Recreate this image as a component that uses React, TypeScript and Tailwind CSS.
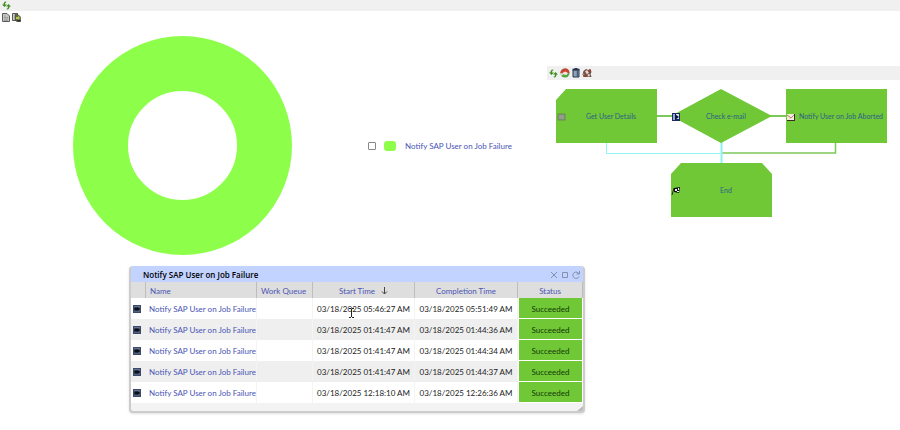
import { useState } from 'react'

interface Job {
  start: string
  completion: string
}

const JOB_NAME = 'Notify SAP User on Job Failure'

const jobs: Job[] = [
  { start: '03/18/2025 05:46:27 AM', completion: '03/18/2025 05:51:49 AM' },
  { start: '03/18/2025 01:41:47 AM', completion: '03/18/2025 01:44:36 AM' },
  { start: '03/18/2025 01:41:47 AM', completion: '03/18/2025 01:44:34 AM' },
  { start: '03/18/2025 01:41:47 AM', completion: '03/18/2025 01:44:37 AM' },
  { start: '03/18/2025 12:18:10 AM', completion: '03/18/2025 12:26:36 AM' },
]

function RefreshIcon() {
  return (
    <svg className="w-[9px] h-[9px]" viewBox="0 0 18 18" fill="#3f8f1f" aria-hidden="true">
      <path d="M8 1C4 1 3 4 3 7H0l5 5 5-5H6C6 4.500 7 3 9 2z" />
      <path d="M10 17c4 0 5-3 5-6h3l-5-5-5 5h4c0 2.500-1 4-3 5z" />
    </svg>
  )
}

function DocumentIcon() {
  return (
    <svg className="w-2 h-[9px]" viewBox="0 0 16 18" aria-hidden="true">
      <path d="M1 1h9l5 5v11H1z" fill="#c6c6c2" stroke="#5c5c5c" strokeWidth="2" />
      <path d="M4 6h4M4 9h8M4 12h8M4 15h8" fill="none" stroke="#777" strokeWidth="1" />
    </svg>
  )
}

function ExportIcon() {
  return (
    <svg className="w-[9px] h-[9px]" viewBox="0 0 18 18" aria-hidden="true">
      <path d="M1 1h10v14H1z" fill="#ccc" stroke="#555" strokeWidth="2" />
      <path d="M6 3h6l5 5v9H9l-3-4z" fill="#5d6b40" stroke="#333" strokeWidth="1" />
      <path d="M8 8h4V5l4 5-4 4v-2H8z" fill="#b5c94a" />
      <path d="M11 14h6v3h-6z" fill="#222" />
    </svg>
  )
}

function RestartIcon() {
  return (
    <svg className="w-[10px] h-[10px]" viewBox="0 0 20 20" aria-hidden="true">
      <ellipse cx="10" cy="10" rx="9" ry="9" fill="#56a53f" />
      <path d="M1 11C0 4 6 1 11 1c5 0 8 4 8 9l-9-1z" fill="#cf4036" />
      <path d="M5 10l5-3 6 3-3 4-6-1z" fill="#f6e6e0" />
      <path d="M1 11l4-1 1 4-3 1z" fill="#f3dcd8" />
    </svg>
  )
}

function TrashIcon() {
  return (
    <svg className="w-2 h-[10px]" viewBox="0 0 16 20" aria-hidden="true">
      <path d="M2 4h12v14H2z" fill="#8fa0b8" stroke="#26354d" strokeWidth="2" />
      <path d="M1 3h14M5 1h6" stroke="#26354d" strokeWidth="3" />
      <path d="M11 5v13" stroke="#4a5d7a" strokeWidth="3" />
    </svg>
  )
}

function DebugIcon() {
  return (
    <svg className="w-[10px] h-[10px]" viewBox="0 0 20 20" aria-hidden="true">
      <path d="M3 6l5-4 4 2 5-2 2 6-2 4 2 6H3l-2-5z" fill="#6b4f47" />
      <path d="M6 7l4-3 4 5-4 4zM12 12l4 1-1 4h-4zM2 11l3 1-1 3z" fill="#e3d5ce" />
      <path d="M13 4l4-1 1 5-4 1zM5 13l4 1v4H5z" fill="#a63a33" />
    </svg>
  )
}

function JobIcon() {
  return (
    <svg className="block w-2 h-2 ml-[2px]" viewBox="0 0 16 16" aria-hidden="true">
      <rect width="16" height="16" fill="#3b4a68" />
      <path d="M2 2h12v3H2zM2 11h12v2H2z" fill="#66748f" />
      <path d="M3 5h6V4l5 4-5 4v-1H3z" fill="#0b0f1a" />
    </svg>
  )
}

function Toolbar() {
  return (
    <div className="flex items-center gap-px h-[14px] pl-px bg-[#f0f0f0]">
      <button aria-label="Refresh" className="w-[10px] flex justify-center"><RefreshIcon /></button>
      <button aria-label="Restart" className="w-[11px] flex justify-center"><RestartIcon /></button>
      <button aria-label="Delete" className="w-[10px] flex justify-center"><TrashIcon /></button>
      <button aria-label="Debug" className="w-[10px] flex justify-center"><DebugIcon /></button>
    </div>
  )
}

function FlowDiagram() {
  return (
    <svg width="353" height="138" viewBox="0 0 353 138" className="block text-[7px]" role="img" aria-label="Process steps">
      <g fill="none">
        <path d="M110 36h16M223 36h16" stroke="#7cc95a" strokeWidth="2" />
        <path d="M288.500 63v10H175" stroke="#7cc95a" strokeWidth="1.500" />
        <path d="M59.500 63v10.500h114" stroke="#8ff5f3" />
        <path d="M174.500 62v22" stroke="#8ff0f0" strokeWidth="2" />
      </g>
      <g fill="#70c837">
        <path d="M19 9h91v54H9V20z" />
        <path d="M174 9l51 27-51 27-50-27z" />
        <path d="M239 9h101v54H239z" />
        <path d="M134 83h81l10 11v43H124V94z" />
      </g>
      <g>
        <rect x="11" y="34" width="7" height="6" fill="#849078" stroke="#6c8a5a" strokeWidth="1" />
        <path d="M12 36h5M12 38h5" stroke="#a3ab9c" strokeWidth="1" />
      </g>
      <g>
        <rect x="125" y="33" width="8" height="8" fill="#1b2d63" />
        <path d="M126 34h2v6h-2z" fill="#8cabd8" />
        <path d="M129 34h3v5h-3z" fill="#dce7f5" />
        <path d="M128 34l4 3-4 3z" fill="#101936" />
      </g>
      <g>
        <rect x="240" y="34" width="8" height="7" fill="#3c2b27" />
        <rect x="240" y="34" width="7" height="6" fill="#f4e9dd" />
        <path d="M240 35l4 3 3-3" fill="none" stroke="#b08078" strokeWidth="1" />
      </g>
      <g>
        <path d="M127 108l-2 7" stroke="#222" strokeWidth="1" />
        <path d="M127 108l6-1-1 6-5-1z" fill="#111" />
        <path d="M128 109h2v2h-2zM130 111h2v1h-2zM131 108h1v2h-1z" fill="#eee" />
      </g>
      <g fill="#2b6286" textAnchor="middle">
        <text x="64" y="39">Get User Details</text>
        <text x="179" y="39">Check e-mail</text>
        <text x="294" y="39">Notify User on Job Aborted</text>
        <text x="179" y="113">End</text>
      </g>
    </svg>
  )
}

function JobsWindow() {
  const head = 'p-0 pt-px font-normal border-r border-[#bdbdbd]'
  const cell = 'p-0 pt-px border-r border-[#f4f4f4]'
  return (
    <section className="w-[456px] ml-[129px] rounded-[4px] border-2 border-t-0 border-[#cccccc] bg-[#f3f3f3] overflow-hidden shadow-sm">
      <header className="flex items-center h-4 pt-px pl-3 pr-[3px] bg-[#c2d3ff]">
        <h2 className="flex-1 font-semibold text-black font-['Open_Sans','Noto_Sans',sans-serif]">{JOB_NAME}</h2>
        <div className="flex gap-[3px] text-[#8390ac]">
          <button aria-label="Close">
            <svg className="w-2 h-2" viewBox="0 0 8 8" fill="none" stroke="currentColor"><path d="M1 1l6 6M7 1L1 7" /></svg>
          </button>
          <button aria-label="Maximize">
            <svg className="w-2 h-2" viewBox="0 0 8 8" fill="none" stroke="currentColor"><path d="M1.500 1.500h5v5h-5z" /></svg>
          </button>
          <button aria-label="Reload">
            <svg className="w-2 h-2" viewBox="0 0 8 8" fill="none" stroke="currentColor"><path d="M7 3A3.200 3.200 0 1 0 7 5.500M7.500 0v3h-3" /></svg>
          </button>
        </div>
      </header>
      <table className="w-full table-fixed border-separate border-spacing-0 whitespace-nowrap">
        <colgroup>
          <col className="w-[15px]" />
          <col className="w-[111px]" />
          <col className="w-[56px]" />
          <col className="w-[102px]" />
          <col className="w-[103px]" />
          <col />
        </colgroup>
        <thead>
          <tr className="h-4 bg-[#dedede] text-[#4a55b5]">
            <th className={head} aria-label="Type" />
            <th className={`${head} text-left pl-1`}>Name</th>
            <th className={`${head} text-left pl-1`}>Work Queue</th>
            <th className={head}>
              <span className="flex items-center justify-center gap-[6px]">
                Start Time
                <svg className="w-[7px] h-2 text-[#444]" viewBox="0 0 7 8" fill="none" stroke="currentColor"><path d="M3.500 0v7M1 4.500l2.500 2.500L6 4.500" /></svg>
              </span>
            </th>
            <th className={head}>Completion Time</th>
            <th className={head}>Status</th>
          </tr>
        </thead>
        <tbody>
          {jobs.map((job, i) => (
            <tr key={i} className="h-[21px] bg-white even:bg-[#efefef] text-center text-[#222]">
              <td className="p-0"><JobIcon /></td>
              <td className={`${cell} text-left pl-[3px]`}>
                <a href="#job" className="text-[#4a55b5]">{JOB_NAME}</a>
              </td>
              <td className={cell} />
              <td className={`${cell} relative`}>
                {job.start}
                {i === 0 && (
                  <svg className="absolute left-9 top-[10px] w-[5px] h-[10px]" viewBox="0 0 5 10" fill="none" stroke="#222" aria-hidden="true">
                    <path d="M0 .5h2M3 .5h2M2.500 1v8M0 9.500h2M3 9.500h2" />
                  </svg>
                )}
              </td>
              <td className={cell}>{job.completion}</td>
              <td className="p-0 pt-px bg-[#70c837] border-b border-x border-white text-[#123a08]">Succeeded</td>
            </tr>
          ))}
        </tbody>
      </table>
      <footer className="flex justify-end items-end h-2">
        <svg className="w-[6px] h-[5px]" viewBox="0 0 6 5" aria-hidden="true"><path d="M6 0v5H0z" fill="#bcbcbc" /></svg>
      </footer>
    </section>
  )
}

export default function App() {
  const [checked, setChecked] = useState(false)

  return (
    <main className="min-h-screen bg-white text-[8px] leading-[10px] font-['Lato','Open_Sans',sans-serif]">
      <div className="flex items-center h-[11px] pl-[2px] bg-[#f0f0f0]">
        <button aria-label="Refresh"><RefreshIcon /></button>
      </div>
      <div className="flex items-center gap-[2px] h-3 pl-[2px]">
        <button aria-label="Copy"><DocumentIcon /></button>
        <button aria-label="Export"><ExportIcon /></button>
      </div>

      <div className="flex items-start">
        <div className="flex items-center w-[547px] shrink-0 pl-[73px] pt-[13px]">
          <svg className="w-[219px] h-[219px]" viewBox="0 0 219 219" role="img" aria-label={JOB_NAME}>
            <circle cx="109.500" cy="109.500" r="82" fill="none" stroke="#8dff4b" strokeWidth="55" />
          </svg>
          <label className="flex items-center ml-[76px] text-[#4a55b5]">
            <input
              type="checkbox"
              checked={checked}
              onChange={e => setChecked(e.target.checked)}
              className="appearance-none w-2 h-2 border border-[#888] rounded-[1px] bg-white checked:bg-[#4a55b5]"
            />
            <span className="w-3 h-[10px] ml-2 mr-[9px] rounded-[3px] bg-[#8dff4b]" />
            {JOB_NAME}
          </label>
        </div>
        <div className="flex-1 min-w-0 mt-[43px]">
          <Toolbar />
          <FlowDiagram />
        </div>
      </div>

      <div className="pt-[11px]">
        <JobsWindow />
      </div>
    </main>
  )
}
